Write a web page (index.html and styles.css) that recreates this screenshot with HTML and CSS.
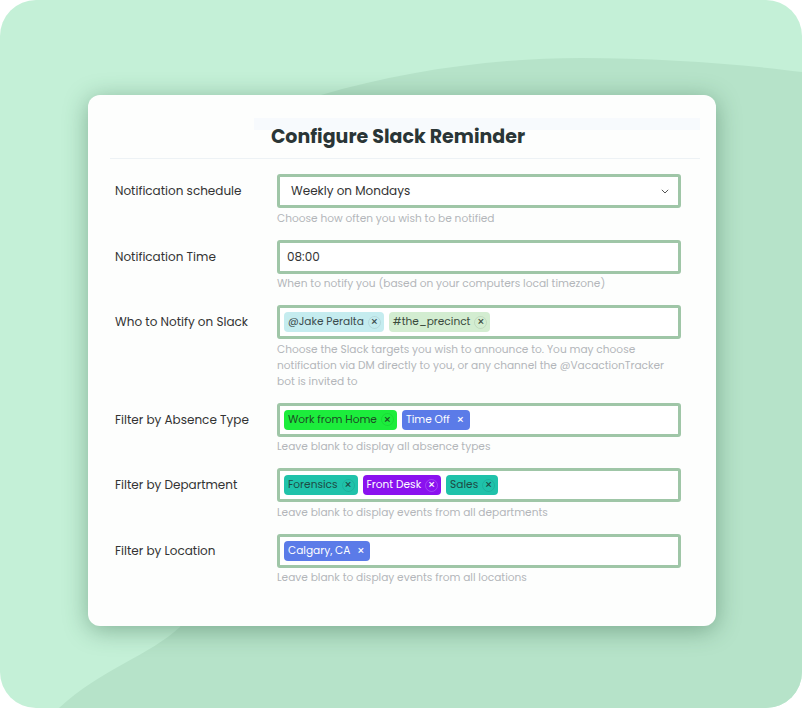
FILE: index.html
```html
<!DOCTYPE html>
<html lang="en">
<head>
  <meta charset="UTF-8">
  <meta name="viewport" content="width=device-width, initial-scale=1.0">
  <title>Configure Slack Reminder</title>
  <link rel="stylesheet" href="styles.css">
</head>
<body>
  <div class="frame">
    <svg class="blob" width="802" height="708" viewBox="0 0 802 708">
      <path d="M321 95 C 400 72, 490 58, 581 58 C 660 58, 740 64, 802 72 L 802 708 L 59 708 C 100 670, 150 655, 180 627 Z" fill="#b6e3c9"/>
    </svg>

    <div class="card">
      <div class="card-header">
        <h1>Configure Slack Reminder</h1>
      </div>

      <div class="form">
        <div class="row">
          <label>Notification schedule</label>
          <div class="field field-select">
            <span>Weekly on Mondays</span>
            <svg width="8" height="5" viewBox="0 0 8 5"><path d="M0.8 0.8 L4 4 L7.2 0.8" fill="none" stroke="#555" stroke-width="1"/></svg>
          </div>
          <div class="help">Choose how often you wish to be notified</div>
        </div>

        <div class="row">
          <label>Notification Time</label>
          <div class="field field-text">08:00</div>
          <div class="help">When to notify you (based on your computers local timezone)</div>
        </div>

        <div class="row">
          <label>Who to Notify on Slack</label>
          <div class="field">
            <span class="tag tag-cyan">@Jake Peralta <span class="tag-x">×</span></span>
            <span class="tag tag-mint">#the_precinct <span class="tag-x">×</span></span>
          </div>
          <div class="help">Choose the Slack targets you wish to announce to. You may choose notification via DM directly to you, or any channel the @VacactionTracker bot is invited to</div>
        </div>

        <div class="row">
          <label>Filter by Absence Type</label>
          <div class="field">
            <span class="tag tag-green">Work from Home <span class="tag-x">×</span></span>
            <span class="tag tag-blue">Time Off <span class="tag-x">×</span></span>
          </div>
          <div class="help">Leave blank to display all absence types</div>
        </div>

        <div class="row">
          <label>Filter by Department</label>
          <div class="field">
            <span class="tag tag-teal">Forensics <span class="tag-x">×</span></span>
            <span class="tag tag-purple">Front Desk <span class="tag-x">×</span></span>
            <span class="tag tag-teal">Sales <span class="tag-x">×</span></span>
          </div>
          <div class="help">Leave blank to display events from all departments</div>
        </div>

        <div class="row">
          <label>Filter by Location</label>
          <div class="field">
            <span class="tag tag-blue">Calgary, CA <span class="tag-x">×</span></span>
          </div>
          <div class="help">Leave blank to display events from all locations</div>
        </div>
      </div>
    </div>
  </div>
</body>
</html>
```

FILE: styles.css
```css
body {
  margin: 0;
  background: #fff;
  font-family: 'Poppins', 'Open Sans', 'DejaVu Sans', sans-serif;
  color: #333;
}

.frame {
  position: relative;
  width: 802px;
  height: 708px;
  box-sizing: border-box;
  padding: 95px 0 0 88px;
  background: #c4f0d7;
  border-radius: 36px;
  overflow: hidden;
}

.blob {
  position: absolute;
  top: 0;
  left: 0;
}

.card {
  position: relative;
  width: 628px;
  height: 531px;
  box-sizing: border-box;
  background: #fdfefd;
  border-radius: 12px;
  box-shadow: 0 4px 24px rgba(30, 80, 50, 0.4);
}

.card-header {
  margin: 0 16px 0 22px;
  padding: 30px 14px 9px 0;
  border-bottom: 1px solid #edf2f5;
  text-align: center;
  background: linear-gradient(#f7fafd, #f7fafd) no-repeat;
  background-size: 446px 12px;
  background-position: right 0 top 23px;
}

.card-header h1 {
  margin: 0;
  font-size: 19px;
  line-height: 24px;
  font-weight: 700;
  color: #2b3636;
}

.form {
  padding: 15px 35px 0 27px;
}

.row {
  display: grid;
  grid-template-columns: 162px 1fr;
  margin-bottom: 13px;
}

.row label {
  font-size: 12px;
  line-height: 34px;
  color: #333;
}

.field {
  height: 34px;
  box-sizing: border-box;
  border: 3px solid #9fc6a7;
  border-radius: 3px;
  background: #fff;
  display: flex;
  align-items: center;
  gap: 5px;
  padding: 0 4px;
  font-size: 12px;
  color: #333;
}

.field-select {
  justify-content: space-between;
  padding: 0 9px 0 11px;
}

.field-text {
  padding: 0 7px;
}

.help {
  grid-column: 2;
  margin-top: 2.5px;
  font-size: 10.6px;
  line-height: 16px;
  color: #b3b6ba;
}

.tag {
  display: inline-flex;
  align-items: center;
  gap: 4px;
  height: 20px;
  padding: 0 3px 0 4px;
  border-radius: 4px;
  font-size: 10.6px;
  white-space: nowrap;
}

.tag-x {
  width: 13px;
  height: 13px;
  border-radius: 50%;
  border: 1px solid rgba(0, 0, 0, 0.08);
  box-sizing: border-box;
  display: inline-flex;
  align-items: center;
  justify-content: center;
  font-size: 12px;
  line-height: 1;
}

.tag-cyan { background: #c5ecef; color: #3a4a4c; }
.tag-mint { background: #d3edd1; color: #3a4a3c; }
.tag-green { background: #1ced3c; color: #1c4a24; }
.tag-blue { background: #5b7be8; color: #fff; }
.tag-teal { background: #1fc2aa; color: #1d4a44; }
.tag-purple { background: #8a12ef; color: #fff; }

.tag-blue .tag-x {
  border-color: transparent;
}

.tag-purple .tag-x {
  border-color: rgba(255, 255, 255, 0.2);
}
```
